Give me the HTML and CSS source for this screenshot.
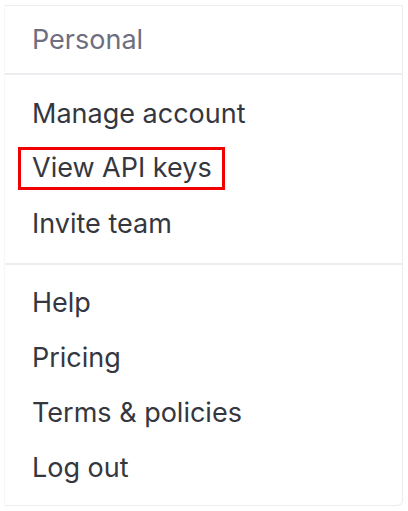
FILE: index.html
```html
<!DOCTYPE html>
<html>
<head>
<meta charset="utf-8">
<link rel="stylesheet" href="styles.css">
</head>
<body>
<div class="menu">
  <div class="header">Personal</div>
  <div class="group first">
    <div class="item">Manage account</div>
    <div class="item"><span class="highlight">View API keys</span></div>
    <div class="item">Invite team</div>
  </div>
  <div class="group second">
    <div class="item">Help</div>
    <div class="item">Pricing</div>
    <div class="item">Terms &amp; policies</div>
    <div class="item">Log out</div>
  </div>
</div>
</body>
</html>
```

FILE: styles.css
```css
html, body {
  margin: 0;
  padding: 0;
  background: #ffffff;
}
body {
  font-family: Inter, "Noto Sans", sans-serif;
  color: #353740;
}
.menu {
  margin: 5px 5px 5px 4px;
  height: 501px;
  border: 1px solid #ececf1;
  border-left-color: #f7f7f8;
  border-radius: 0 0 6px 0;
  box-sizing: border-box;
  display: flex;
  flex-direction: column;
}
.header {
  height: 70px;
  display: flex;
  align-items: center;
  padding: 0 0 0 27px;
  font-size: 27px;
  color: #6e6e80;
  border-bottom: 2px solid #ececf1;
  box-sizing: border-box;
}
.group {
  display: flex;
  flex-direction: column;
}
.group.first {
  padding: 11px 0 12px;
  border-bottom: 2px solid #ececf1;
}
.group.second {
  padding: 10px 0 10px;
}
.item {
  height: 55px;
  display: flex;
  align-items: center;
  padding-left: 27px;
  font-size: 27px;
}
.highlight {
  display: inline-block;
  margin-left: -14px;
  padding: 4px 10px 5px 11px;
  border: 3px solid #f00000;
  line-height: 28px;
}
```
